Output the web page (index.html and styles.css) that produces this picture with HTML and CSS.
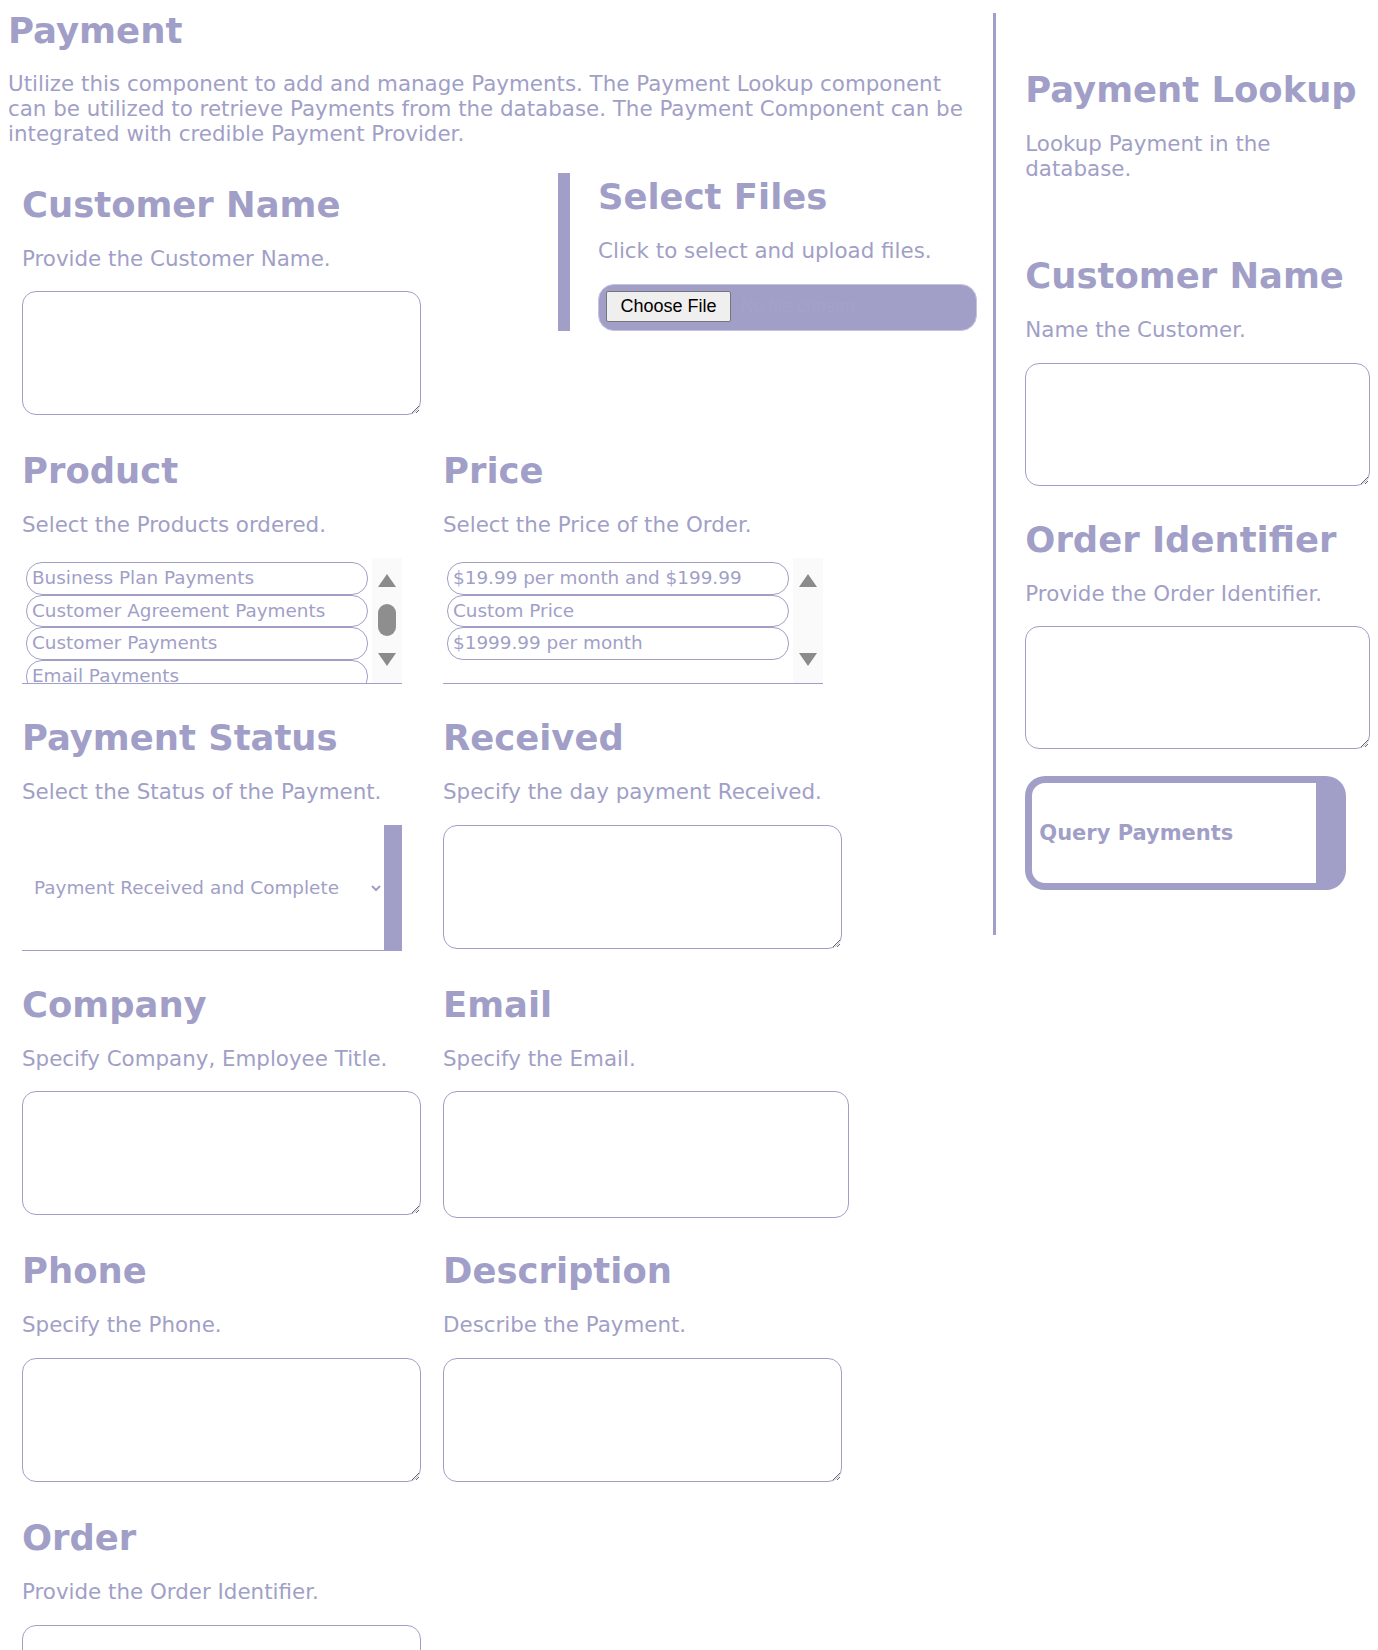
FILE: index.html
```html
<!DOCTYPE html>
<html lang="en">
<head>
    <meta charset="UTF-8">
    <meta name="viewport" content="width=device-width, initial-scale=1.0">
    <title>Payment</title>
    <link rel="stylesheet" href="styles.css">
</head>
<body>
    <div class="page">
        <main class="payment">
            <h1>Payment</h1>
            <p class="intro">Utilize this component to add and manage Payments. The Payment Lookup component can be utilized to retrieve Payments from the database. The Payment Component can be integrated with credible Payment Provider.</p>

            <div class="top-row">
                <div class="field">
                    <h2>Customer Name</h2>
                    <p>Provide the Customer Name.</p>
                    <textarea></textarea>
                </div>
                <div class="upload">
                    <h2>Select Files</h2>
                    <p>Click to select and upload files.</p>
                    <input type="file" class="file-input">
                </div>
            </div>

            <div class="fields">
                <div class="field">
                    <h2>Product</h2>
                    <p>Select the Products ordered.</p>
                    <div class="listbox">
                        <div class="options">
                            <div class="opt">Business Plan Payments</div>
                            <div class="opt">Customer Agreement Payments</div>
                            <div class="opt">Customer Payments</div>
                            <div class="opt">Email Payments</div>
                        </div>
                        <div class="scrollbar">
                            <span class="arrow-up"></span>
                            <span class="thumb"></span>
                            <span class="arrow-down"></span>
                        </div>
                    </div>
                </div>
                <div class="field">
                    <h2>Price</h2>
                    <p>Select the Price of the Order.</p>
                    <div class="listbox">
                        <div class="options">
                            <div class="opt">$19.99 per month and $199.99</div>
                            <div class="opt">Custom Price</div>
                            <div class="opt">$1999.99 per month</div>
                        </div>
                        <div class="scrollbar">
                            <span class="arrow-up"></span>
                            <span class="arrow-down"></span>
                        </div>
                    </div>
                </div>
                <div class="field">
                    <h2>Payment Status</h2>
                    <p>Select the Status of the Payment.</p>
                    <select class="status">
                        <option>Payment Received and Complete</option>
                        <option>Payment Pending</option>
                    </select>
                </div>
                <div class="field">
                    <h2>Received</h2>
                    <p>Specify the day payment Received.</p>
                    <textarea></textarea>
                </div>
                <div class="field">
                    <h2>Company</h2>
                    <p>Specify Company, Employee Title.</p>
                    <textarea></textarea>
                </div>
                <div class="field">
                    <h2>Email</h2>
                    <p>Specify the Email.</p>
                    <input type="email" class="email">
                </div>
                <div class="field">
                    <h2>Phone</h2>
                    <p>Specify the Phone.</p>
                    <textarea></textarea>
                </div>
                <div class="field">
                    <h2>Description</h2>
                    <p>Describe the Payment.</p>
                    <textarea></textarea>
                </div>
                <div class="field">
                    <h2>Order</h2>
                    <p>Provide the Order Identifier.</p>
                    <textarea></textarea>
                </div>
            </div>
        </main>

        <aside class="lookup">
            <h2>Payment Lookup</h2>
            <p class="lookup-intro">Lookup Payment in the database.</p>

            <div class="lookup-field">
                <h2>Customer Name</h2>
                <p>Name the Customer.</p>
                <textarea></textarea>
            </div>
            <div class="lookup-field">
                <h2>Order Identifier</h2>
                <p>Provide the Order Identifier.</p>
                <textarea></textarea>
            </div>
            <button class="query-btn">Query Payments</button>
        </aside>
    </div>
</body>
</html>
```

FILE: styles.css
```css
body {
    margin: 8px;
    font-family: "DejaVu Sans", Verdana, sans-serif;
    color: #a19fc7;
    background-color: #fff;
}

.page {
    display: flex;
    align-items: flex-start;
}

h1 {
    font-size: 35.5px;
    margin: 2px 0 19.5px;
}

h2 {
    font-size: 35.4px;
    margin: 0 0 21px;
}

p {
    font-size: 21.4px;
    margin: 0 0 20.5px;
}

/* main column */
.payment {
    flex: 0 0 969px;
}

.intro {
    margin-bottom: 27.5px;
}

.top-row {
    display: flex;
    justify-content: space-between;
    align-items: flex-start;
    margin-left: 14px;
}

.fields {
    display: grid;
    grid-template-columns: 421px 421px;
    margin-left: 14px;
}

.field {
    height: 266.7px;
    box-sizing: border-box;
    padding-top: 10.7px;
}

textarea {
    display: block;
    width: 399px;
    height: 124px;
    box-sizing: border-box;
    border: 1px solid #a19fc7;
    border-radius: 14px;
    padding: 8px;
    font-family: inherit;
    background: #fff;
}

.email {
    display: block;
    width: 406px;
    height: 127px;
    box-sizing: border-box;
    border: 1px solid #a19fc7;
    border-radius: 14px;
    padding: 8px;
    font-family: inherit;
}

/* file upload */
.upload {
    width: 419px;
    box-sizing: border-box;
    border-left: 12px solid #a19fc7;
    padding: 3px 0 0 28px;
}

.file-input {
    display: block;
    width: 100%;
    height: 47px;
    box-sizing: border-box;
    padding: 6.5px 7px;
    border: 1px solid #c4c2de;
    border-radius: 16px;
    background-color: #a19fc7;
    color: #a4a2c9;
    font: 18px "Liberation Sans", Arial, sans-serif;
}

.file-input::file-selector-button {
    font: 18px "Liberation Sans", Arial, sans-serif;
    color: #000;
    background-color: #efefef;
    border: 1px solid #767676;
    border-radius: 2px;
    padding: 4px 13.5px;
    margin-right: 10px;
}

/* list boxes */
.listbox {
    display: flex;
    width: 380px;
    height: 126px;
    box-sizing: border-box;
    border-bottom: 1px solid #a19fc7;
    font-size: 18.4px;
}

.options {
    flex: 1;
    overflow: hidden;
    padding-top: 4px;
}

.opt {
    margin: 0 4px;
    padding: 0 5px;
    border: 1px solid #a19fc7;
    border-radius: 16px;
    line-height: 30.7px;
    white-space: nowrap;
    overflow: hidden;
}

.scrollbar {
    width: 30px;
    display: flex;
    flex-direction: column;
    align-items: center;
    padding: 16px 0 17px;
    box-sizing: border-box;
    background-color: #fafafa;
}

.arrow-up,
.arrow-down {
    width: 0;
    height: 0;
    border-left: 9px solid transparent;
    border-right: 9px solid transparent;
}

.arrow-up {
    border-bottom: 13px solid #8b8b8b;
}

.arrow-down {
    margin-top: auto;
    border-top: 13px solid #8b8b8b;
}

.thumb {
    width: 18px;
    height: 32.7px;
    margin-top: 16.7px;
    border-radius: 9px;
    background-color: #8e8e8e;
}

.status {
    display: block;
    width: 380px;
    height: 126px;
    box-sizing: border-box;
    border: 0;
    border-bottom: 1px solid #a19fc7;
    border-right: 18px solid #a19fc7;
    border-radius: 0;
    padding: 0 0 0 8px;
    background-color: #fff;
    color: #a19fc7;
    font: 18.4px "DejaVu Sans", Verdana, sans-serif;
}

/* lookup side panel */
.lookup {
    flex: 1;
    margin: 5.3px 0 0 16px;
    border-left: 3px solid #a19fc7;
    padding: 56px 0 45.6px 29.3px;
}

.lookup .lookup-intro {
    margin-bottom: 63.5px;
}

.lookup-field {
    padding: 10.7px 0 22px;
}

.lookup-field textarea {
    width: 100%;
    height: 123px;
}

.query-btn {
    display: block;
    width: 321px;
    height: 113.7px;
    margin-top: 5px;
    box-sizing: border-box;
    border: 7px solid #a19fc7;
    border-right-width: 30px;
    border-radius: 20px;
    padding: 0 7px;
    background-color: #fff;
    color: #a19fc7;
    font: bold 21px "DejaVu Sans", Verdana, sans-serif;
    text-align: left;
    cursor: pointer;
}
```
